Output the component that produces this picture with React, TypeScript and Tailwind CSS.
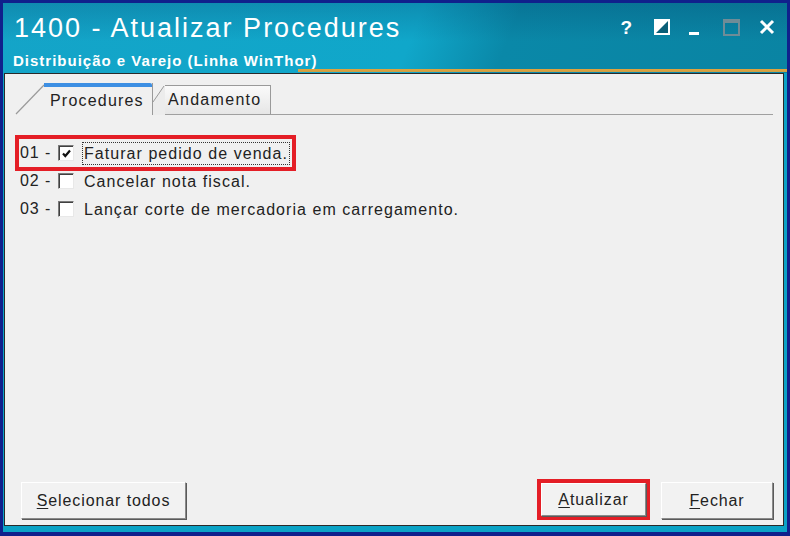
import React from "react";

const FONT = { fontFamily: '"Liberation Sans", Arial, sans-serif' };

const items = [
  { n: "01", label: "Faturar pedido de venda.", checked: true },
  { n: "02", label: "Cancelar nota fiscal.", checked: false },
  { n: "03", label: "Lançar corte de mercadoria em carregamento.", checked: false },
];

function Checkbox({ checked }: { checked: boolean }) {
  return (
    <div className="shrink-0 w-[16px] h-[16px] border-t border-l border-[#7a7a7a] border-r border-b border-r-[#e8e8e8] border-b-[#e8e8e8] bg-white flex items-center justify-center shadow-[inset_1px_1px_0_#404040]">
      {checked && (
        <svg width="11" height="11" viewBox="0 0 11 11">
          <path d="M2 5.5 L4.3 8 L9 2.5" fill="none" stroke="#111" strokeWidth="2.2" />
        </svg>
      )}
    </div>
  );
}

function WinButton({ label, u, className = "" }: { label: string; u: string; className?: string }) {
  return (
    <button
      className={`h-[37px] bg-[#f2f2f2] border border-t-white border-l-white border-r-[#8a8a8a] border-b-[#8a8a8a] shadow-[1px_1px_0_#5a5a5a] text-[16px] text-[#222] tracking-[0.9px] ${className}`}
    >
      <span className="underline underline-offset-2">{u}</span>
      {label.slice(u.length)}
    </button>
  );
}

function TitleControls() {
  return (
    <div className="flex items-start self-start pt-[16px] pr-[12px]">
      <span className="text-white font-bold text-[19px] leading-[17px]" style={FONT}>?</span>
      <svg width="16" height="16" viewBox="0 0 16 16" className="ml-[22px]">
        <rect x="1" y="1" width="14" height="14" fill="#fff" />
        <path d="M15 1 L15 15 L1 15 Z" fill="#0a5f78" />
        <rect x="1" y="1" width="14" height="14" fill="none" stroke="#fff" strokeWidth="2" />
      </svg>
      <div className="w-[10px] h-[3px] bg-white mt-[13px] ml-[19px]" />
      <div className="w-[17px] h-[17px] border-2 border-t-[4px] border-[#6f8c97] ml-[24px]" />
      <svg width="16" height="16" viewBox="0 0 16 16" className="ml-[19px]">
        <path d="M2 2 L14 14 M14 2 L2 14" stroke="#fff" strokeWidth="3" />
      </svg>
    </div>
  );
}

function Tabs() {
  return (
    <div className="flex items-end h-[33px] mt-[8px]" style={FONT}>
      <svg width="30" height="32" viewBox="0 0 30 32" className="shrink-0 ml-[10px]">
        <path d="M1 31 L29 2" stroke="#9a9a9a" strokeWidth="1.2" />
      </svg>
      <div className="h-[32px] w-[109px] -ml-[1px] border-r border-[#9a9a9a] bg-[#f0f0f0] flex flex-col">
        <div className="h-[4px] bg-[#3d8fe3] rounded-tr-[2px]" />
        <div className="flex-1 flex items-center pl-[6px] text-[16px] text-[#222] tracking-[1.2px]">Procedures</div>
      </div>
      <svg width="12" height="30" viewBox="0 0 12 30" className="shrink-0">
        <path d="M0 17 L11 1 L12 1 L12 30 L0 30 Z" fill="#ececec" />
        <path d="M0 17 L11 1" stroke="#9a9a9a" strokeWidth="1" />
      </svg>
      <div className="h-[30px] w-[106px] border-t border-r border-b border-[#9a9a9a] border-b-[#a0a0a0] bg-[linear-gradient(#fafafa,#e6e6e6)] flex items-center pl-[3px] text-[16px] text-[#222] tracking-[1.3px]">
        Andamento
      </div>
      <div className="flex-1 h-full border-b border-[#a0a0a0] mr-[10px]" />
    </div>
  );
}

export default function App() {
  return (
    <div className="w-[790px] h-[536px] bg-[#10208c] pt-[3px] pl-[3px] pr-[3px] pb-[4px]" style={FONT}>
      <div className="w-full h-full flex flex-col bg-[#0ba3c6] pl-[1px] pr-[3px] pb-[6px]">
        <div className="h-[70px] -ml-[1px] -mr-[3px] flex justify-between relative bg-[linear-gradient(180deg,rgba(0,40,80,0.2)_0%,rgba(0,0,0,0)_55%),linear-gradient(112deg,#14a4c8_0%,#10a7ca_52%,#0a88a8_64%,#0a84a3_100%)]">
          <div className="pl-[11px] pt-[10px]">
            <div className="text-white text-[27px] leading-[30px] tracking-[2px]">1400 - Atualizar Procedures</div>
            <div className="text-white font-bold text-[15px] leading-[16px] mt-[10px] tracking-[1px] -ml-[1px]">
              Distribuição e Varejo (Linha WinThor)
            </div>
          </div>
          <TitleControls />
          <div className="absolute left-[295px] right-0 bottom-[1px] h-[3px] bg-[linear-gradient(180deg,#e3a33a,#c9a048)]" />
        </div>
        <div className="flex-1 border border-[#2a2a2a] bg-[#f0f0f0] flex flex-col">
          <Tabs />
          <div className="flex flex-col items-start pl-[14px] pt-[24px] text-[16px] text-[#222] tracking-[1.05px]">
            {items.map((it, i) => (
              <div
                key={it.n}
                className={`flex items-center h-[28px] pl-[1px] ${i === 0 ? "w-[273px] outline-[4px] outline-solid outline-[#e41e26]" : ""}`}
              >
                <span className="w-[38px] whitespace-nowrap tracking-[0.9px]">{it.n} -</span>
                <Checkbox checked={it.checked} />
                <span
                  className={`ml-[9px] px-[1px] leading-[21px] whitespace-nowrap ${i === 0 ? "outline-1 outline-dotted outline-[#333]" : ""}`}
                >
                  {it.label}
                </span>
              </div>
            ))}
          </div>
          <div className="mt-auto flex items-end justify-between pl-[16px] pr-[10px] pb-[6px]">
            <WinButton label="Selecionar todos" u="S" className="w-[165px]" />
            <div className="flex items-end gap-[11px]">
              <div className="w-[113px] h-[41px] -mb-[1px] border-[4px] border-[#e41e26] flex">
                <WinButton label="Atualizar" u="A" className="w-full !h-full" />
              </div>
              <WinButton label="Fechar" u="F" className="w-[112px]" />
            </div>
          </div>
        </div>
      </div>
    </div>
  );
}
